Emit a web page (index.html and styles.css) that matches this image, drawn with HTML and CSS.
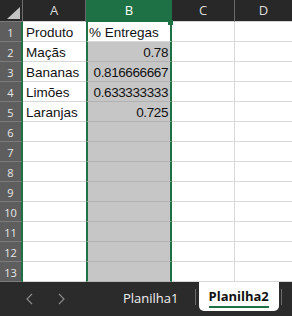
FILE: index.html
```html
<!DOCTYPE html>
<html lang="pt">
<head>
    <meta charset="UTF-8">
    <title>Planilha2</title>
    <link rel="stylesheet" href="styles.css">
</head>
<body>
    <div class="sheet">
        <div class="grid">
            <!-- Column headers -->
            <div class="corner">
                <svg width="23" height="22" viewBox="0 0 23 22"><polygon points="7,19 20,19 20,7" fill="#c4c4c4"/></svg>
            </div>
            <div class="col-head">A</div>
            <div class="col-head selected">B</div>
            <div class="col-head">C</div>
            <div class="col-head last">D</div>

            <!-- Rows -->
            <div class="row-head">1</div>
            <div class="cell col-a">Produto</div>
            <div class="cell col-b active">% Entregas</div>
            <div class="cell col-c"></div>
            <div class="cell col-d"></div>

            <div class="row-head">2</div>
            <div class="cell col-a">Maçãs</div>
            <div class="cell col-b num">0.78</div>
            <div class="cell col-c"></div>
            <div class="cell col-d"></div>

            <div class="row-head">3</div>
            <div class="cell col-a">Bananas</div>
            <div class="cell col-b num">0.816666667</div>
            <div class="cell col-c"></div>
            <div class="cell col-d"></div>

            <div class="row-head">4</div>
            <div class="cell col-a">Limões</div>
            <div class="cell col-b num">0.633333333</div>
            <div class="cell col-c"></div>
            <div class="cell col-d"></div>

            <div class="row-head">5</div>
            <div class="cell col-a">Laranjas</div>
            <div class="cell col-b num">0.725</div>
            <div class="cell col-c"></div>
            <div class="cell col-d"></div>

            <div class="row-head">6</div>
            <div class="cell col-a"></div>
            <div class="cell col-b"></div>
            <div class="cell col-c"></div>
            <div class="cell col-d"></div>

            <div class="row-head">7</div>
            <div class="cell col-a"></div>
            <div class="cell col-b"></div>
            <div class="cell col-c"></div>
            <div class="cell col-d"></div>

            <div class="row-head">8</div>
            <div class="cell col-a"></div>
            <div class="cell col-b"></div>
            <div class="cell col-c"></div>
            <div class="cell col-d"></div>

            <div class="row-head">9</div>
            <div class="cell col-a"></div>
            <div class="cell col-b"></div>
            <div class="cell col-c"></div>
            <div class="cell col-d"></div>

            <div class="row-head">10</div>
            <div class="cell col-a"></div>
            <div class="cell col-b"></div>
            <div class="cell col-c"></div>
            <div class="cell col-d"></div>

            <div class="row-head">11</div>
            <div class="cell col-a"></div>
            <div class="cell col-b"></div>
            <div class="cell col-c"></div>
            <div class="cell col-d"></div>

            <div class="row-head">12</div>
            <div class="cell col-a"></div>
            <div class="cell col-b"></div>
            <div class="cell col-c"></div>
            <div class="cell col-d"></div>

            <div class="row-head">13</div>
            <div class="cell col-a"></div>
            <div class="cell col-b"></div>
            <div class="cell col-c"></div>
            <div class="cell col-d"></div>

            <!-- Fill handle of the selection -->
            <div class="fill-handle"></div>
        </div>

        <!-- Sheet tabs -->
        <div class="tabs">
            <div class="nav">
                <svg width="32" height="34" viewBox="0 0 32 34"><polyline points="19,12 14,17 19,22" fill="none" stroke="#8a8a8a" stroke-width="1.2"/></svg>
            </div>
            <div class="nav">
                <svg width="32" height="34" viewBox="0 0 32 34"><polyline points="14,12 19,17 14,22" fill="none" stroke="#8a8a8a" stroke-width="1.2"/></svg>
            </div>
            <div class="tab">Planilha1</div>
            <div class="tab-sep"></div>
            <div class="tab current"><span>Planilha2</span></div>
            <div class="tab-sep"></div>
        </div>
    </div>
</body>
</html>
```

FILE: styles.css
```css
/* Basic Reset */
body, div {
    margin: 0;
    padding: 0;
    box-sizing: border-box;
}

body {
    width: 292px;
    height: 316px;
    overflow: hidden;
    background: #2b2b2b;
    font-family: 'Liberation Sans', Arial, sans-serif;
}

.sheet {
    width: 292px;
    height: 316px;
    display: flex;
    flex-direction: column;
}

.grid {
    position: relative;
    display: grid;
    grid-template-columns: 23px 63px 86px 63px 57px;
    grid-template-rows: 22px repeat(13, 20px);
}

/* Column headers */
.corner {
    background: #282828;
    border-right: 1px solid #6e6e6e;
    border-bottom: 1px solid #7a7a7a;
}

.corner svg {
    display: block;
}

.col-head {
    background: #282828;
    color: #dcdcdc;
    font-family: 'Open Sans', sans-serif;
    font-size: 13px;
    line-height: 21px;
    text-align: center;
    border-right: 1px solid #6a6a6a;
    border-bottom: 1px solid #d4d4d4;
}

.col-head.selected {
    background: #1e7145;
    color: #fff;
    border-right: none;
    border-bottom: none;
}

.col-head.last {
    border-right: none;
}

/* Row headers */
.row-head {
    background: #5e5e5e;
    color: #e8e8e8;
    font-family: 'Open Sans', sans-serif;
    font-size: 11px;
    line-height: 17px;
    padding-top: 2px;
    text-align: center;
    border-right: 2px solid #1e7145;
    border-bottom: 1px solid #7c7c7c;
}

/* Cells */
.cell {
    background: #fff;
    color: #111;
    font-size: 13.5px;
    line-height: 16px;
    padding-top: 3px;
    white-space: nowrap;
    overflow: hidden;
    border-bottom: 1px solid #d9d9d9;
}

.col-a {
    padding-left: 3px;
}

.col-b {
    background: #c6c6c6;
    border-left: 2px solid #1e7145;
    border-right: 2px solid #1e7145;
    border-bottom-color: #b2b2b2;
    padding-left: 1px;
}

.col-b.active {
    background: #fff;
    border-bottom-color: #d9d9d9;
}

.col-b.num {
    text-align: right;
    padding-right: 2px;
    letter-spacing: -0.4px;
}

.col-c {
    border-right: 1px solid #d9d9d9;
}

.fill-handle {
    position: absolute;
    left: 168px;
    top: 20px;
    width: 5px;
    height: 5px;
    background: #1e7145;
}

/* Sheet tabs */
.tabs {
    flex: 1;
    display: flex;
    align-items: flex-start;
    padding-left: 13px;
    background: #2b2b2b;
    font-family: 'Open Sans', sans-serif;
    font-size: 13px;
}

.nav {
    width: 32px;
    height: 34px;
}

.nav svg {
    display: block;
}

.tab {
    margin-left: 30px;
    padding: 7px 16px 0;
    line-height: 18px;
    color: #f0f0f0;
}

.tab-sep {
    width: 1px;
    height: 16px;
    margin-top: 7px;
    background: #6b6b6b;
}

.tab.current {
    margin-left: 3px;
    margin-right: 2px;
    height: 29px;
    padding: 5px 10px 0;
    background: #fff;
    color: #111;
    font-weight: bold;
    border-radius: 0 0 5px 5px;
}

.tab.current span {
    display: inline-block;
    padding-bottom: 1px;
    border-bottom: 2px solid #1e7145;
}
```
